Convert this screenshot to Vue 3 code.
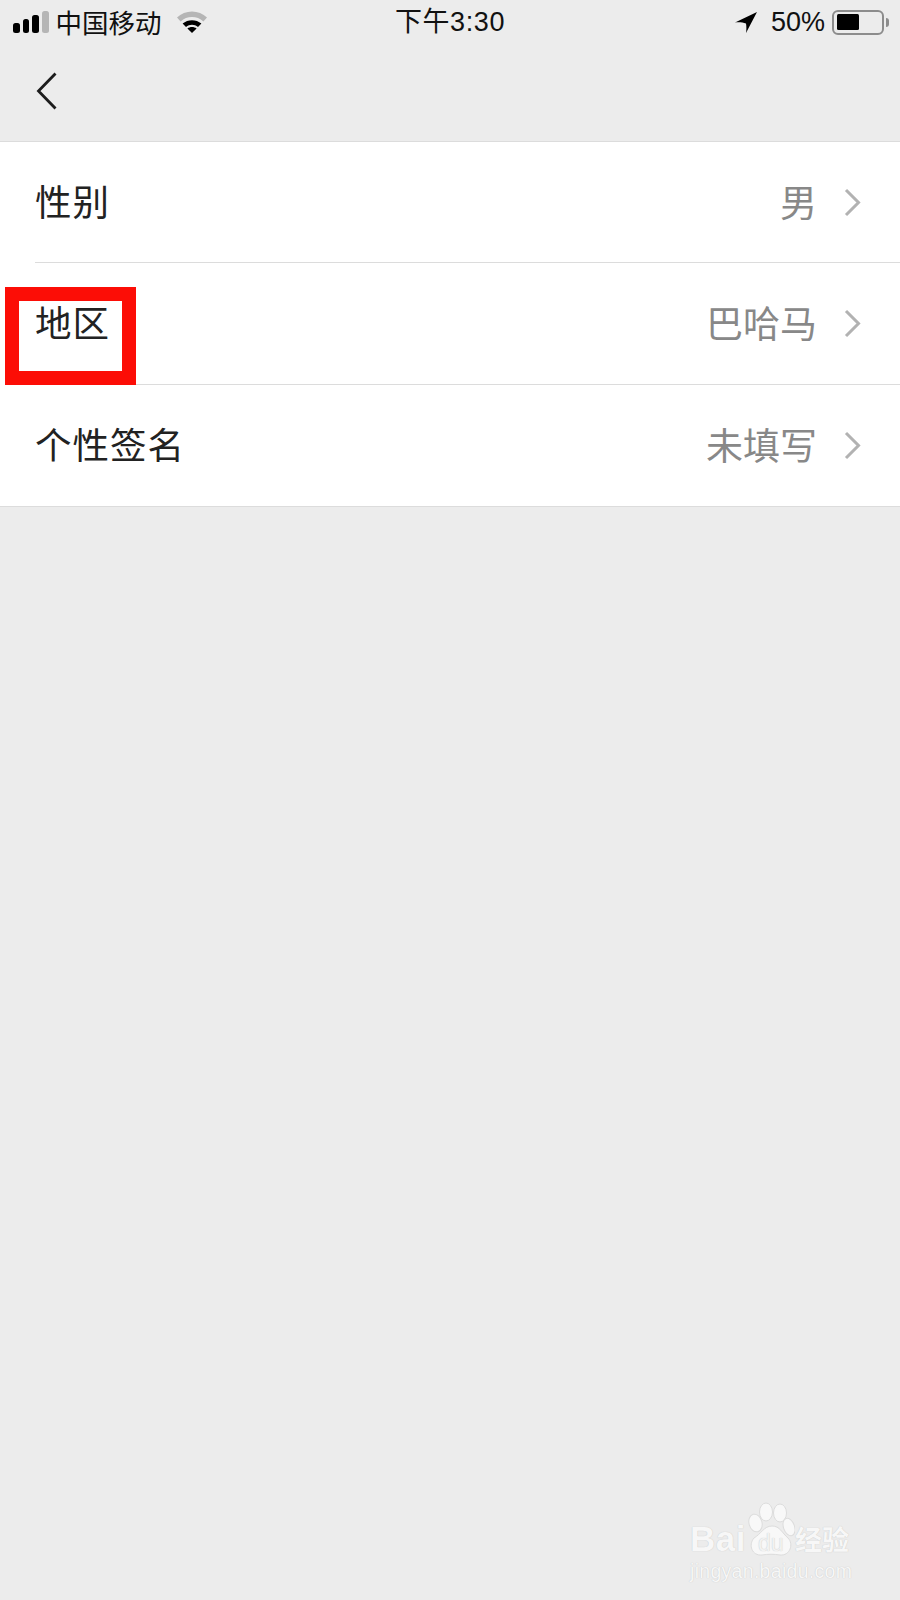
<script setup>
const rows = [
  { label: '性别', value: '男' },
  { label: '地区', value: '巴哈马' },
  { label: '个性签名', value: '未填写' },
]
</script>

<template>
  <div class="page">
    <header class="status">
      <div class="status-left">
        <div class="signal">
          <i class="bar b1"></i><i class="bar b2"></i><i class="bar b3"></i><i class="bar b4"></i>
        </div>
        <span class="carrier">中国移动</span>
        <svg class="wifi" width="30" height="22" viewBox="0 0 30 22">
          <path d="M0 6.500 C8 -1.500 22 -1.500 30 6.500 L26.400 10.400 C20 4.600 10 4.600 3.600 10.400 Z" fill="#b5b5b5" />
          <path d="M5.600 12.600 C11 8 19 8 24.400 12.600 L21 16 C17.400 13.100 12.600 13.100 9 16 Z" fill="#000" />
          <path d="M10.400 17.400 C13 15.400 17 15.400 19.600 17.400 L15 22 Z" fill="#000" />
        </svg>
      </div>
      <div class="time">下午3:30</div>
      <div class="status-right">
        <svg class="arrow" width="22" height="21" viewBox="0 0 22 21">
          <path d="M22 0 L0 10.500 C4 10 8 10.500 11 11.500 C11.500 14.500 11.500 18 11 21 Z" fill="#000" />
        </svg>
        <span class="battery-text">50%</span>
        <div class="battery"><div class="battery-fill"></div></div>
        <div class="battery-tip"></div>
      </div>
    </header>

    <nav class="nav">
      <svg class="back" width="21" height="38" viewBox="0 0 21 38">
        <path d="M19.500 1.500 L2.500 19 L19.500 36.500" fill="none" stroke="#1c1c1c" stroke-width="2.800" />
      </svg>
    </nav>

    <section class="list">
      <div v-for="row in rows" :key="row.label" class="row">
        <span class="label">{{ row.label }}</span>
        <span class="value">{{ row.value }}</span>
        <svg class="chev" width="17" height="29" viewBox="0 0 17 29">
          <path d="M2 2 L14.500 14.500 L2 27" fill="none" stroke="#b2b2b2" stroke-width="3" />
        </svg>
      </div>
      <div class="highlight"></div>
    </section>

    <div class="watermark">
      <div class="mark-top">
        <span class="mark-bai">Bai</span>
        <div class="mark-paw">
          <svg width="52" height="56" viewBox="0 0 52 56">
            <g fill="#f8f8f8" stroke="#dcdcdc" stroke-width="1">
              <ellipse cx="23" cy="10" rx="6.500" ry="9" />
              <ellipse cx="37" cy="11" rx="6.500" ry="9" />
              <ellipse cx="12.500" cy="21" rx="6.500" ry="9" transform="rotate(-15 12.500 21)" />
              <ellipse cx="46" cy="25" rx="5.500" ry="9" transform="rotate(-20 46 25)" />
              <path d="M29 24 C37 24 39 31 45 36 C51 42 47 54 37 53 C31 52 25 52 19 53 C9 54 5 43 11 36 C18 32 21 24 29 24 Z" />
            </g>
          </svg>
          <span class="mark-du">du</span>
        </div>
        <span class="mark-cn">经验</span>
      </div>
      <div class="mark-domain">jingyan.baidu.com</div>
    </div>
  </div>
</template>

<style scoped>
.page {
  position: relative;
  width: 900px;
  height: 1600px;
  overflow: hidden;
  background: #ececec;
  font-family: "Noto Sans CJK SC", "Liberation Sans", sans-serif;
}

.status {
  display: grid;
  grid-template-columns: 1fr auto 1fr;
  align-items: center;
  height: 44px;
  color: #111;
}
.status-left {
  display: flex;
  align-items: center;
  padding-left: 13px;
}
.signal {
  display: flex;
  align-items: flex-end;
  gap: 3px;
  height: 22px;
}
.bar {
  display: block;
  width: 6.500px;
  border-radius: 2.500px;
  background: #000;
}
.b1 { height: 10px; }
.b2 { height: 14px; }
.b3 { height: 18px; }
.b4 { height: 22px; width: 7px; background: #b5b5b5; }
.carrier {
  margin-left: 7px;
  font-size: 26.500px;
  line-height: 44px;
}
.wifi {
  margin-left: 15px;
}
.time {
  font-family: "Liberation Sans", "Noto Sans CJK SC", sans-serif;
  font-size: 27px;
  line-height: 44px;
  letter-spacing: 0.600px;
}
.status-right {
  display: flex;
  align-items: center;
  justify-content: flex-end;
  padding-right: 11px;
}
.arrow {
  margin-right: 14px;
}
.battery-text {
  font-family: "Liberation Sans", sans-serif;
  font-size: 27px;
  line-height: 44px;
  margin-right: 7px;
}
.battery {
  box-sizing: border-box;
  width: 52px;
  height: 25px;
  border: 2px solid #8c8c8c;
  border-radius: 6px;
  padding: 2.500px 3px;
}
.battery-fill {
  width: 22px;
  height: 100%;
  background: #000;
  border-radius: 1.500px;
}
.battery-tip {
  width: 3px;
  height: 9px;
  margin-left: 2px;
  background: #8c8c8c;
  border-radius: 0 3px 3px 0;
}

.nav {
  display: flex;
  align-items: center;
  box-sizing: border-box;
  height: 98px;
  padding: 0 0 3px 36px;
  border-bottom: 1px solid #dcdcdc;
}
.back {
  display: block;
}

.list {
  position: relative;
  background: #fff;
  border-bottom: 1px solid #dcdcdc;
}
.row {
  position: relative;
  display: flex;
  align-items: center;
  box-sizing: border-box;
  height: 122px;
  padding: 0 39px 0 35px;
}
.row:first-child {
  height: 120px;
}
.row + .row::before {
  content: "";
  position: absolute;
  left: 35px;
  right: 0;
  top: 0;
  height: 1px;
  background: #dcdcdc;
}
.label {
  flex: 1;
  margin-bottom: 3px;
  font-size: 36.500px;
  line-height: 50px;
  letter-spacing: 1px;
  color: #222;
}
.value {
  margin-bottom: 3px;
  font-size: 37px;
  line-height: 50px;
  color: #888;
}
.chev {
  display: block;
  margin-left: 27px;
}

/* annotation frame drawn over the region row */
.highlight {
  position: absolute;
  left: 5px;
  top: 145px;
  box-sizing: border-box;
  width: 131px;
  height: 98px;
  border: 14px solid #fc0d06;
}

.watermark {
  position: absolute;
  left: 690px;
  top: 1500px;
  width: 170px;
  color: #f7f7f7;
  text-shadow: 0 0 1px #bdbdbd;
}
.mark-top {
  display: flex;
  align-items: flex-end;
  height: 58px;
}
.mark-bai {
  font-family: "Liberation Sans", sans-serif;
  font-weight: 700;
  font-size: 35px;
  line-height: 38px;
  letter-spacing: 0.500px;
}
.mark-paw {
  position: relative;
  width: 52px;
  height: 56px;
  margin-left: -3px;
}
.mark-paw svg {
  display: block;
}
.mark-du {
  position: absolute;
  left: 15px;
  top: 28px;
  font-family: "Liberation Sans", sans-serif;
  font-size: 23px;
  line-height: 26px;
  color: #f2f2f2;
}
.mark-cn {
  font-size: 27px;
  line-height: 38px;
  font-weight: 700;
}
.mark-domain {
  margin-top: 1px;
  font-family: "Liberation Sans", sans-serif;
  font-size: 19.500px;
  line-height: 24px;
  letter-spacing: 0.300px;
}
</style>
